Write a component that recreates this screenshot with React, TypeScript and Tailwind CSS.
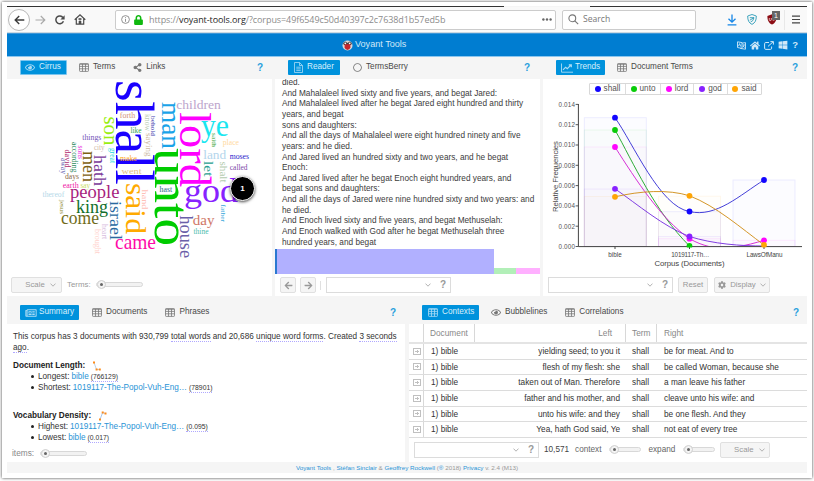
import React from "react";
import {
  FaArrowLeft,
  FaArrowRight,
  FaCog,
  FaHome,
  FaLock,
  FaRegCircle,
  FaRegEye,
  FaRegNewspaper,
  FaShareAlt,
  FaWindows,
} from "react-icons/fa";

type Word = [string, number, number, number, number, string, boolean?];

/* text, x, y, font size, drawn length, colour, vertical */
const words: Word[] = [
  ["shall", 115.5, 80, 55, 105, "#1a00ff", true],
  ["unto", 155, 148, 50, 98, "#00cc00", true],
  ["lord", 179.5, 112, 44, 75, "#ff00ff", true],
  ["man", 161.5, 102, 27, 47, "#1aa3e8", true],
  ["ye", 201, 136, 31, 28, "#1ae6f0", false],
  ["god", 184, 201.5, 33, 54, "#8822ff", false],
  ["said", 125.5, 183, 30, 51, "#ffaa00", true],
  ["came", 115, 249, 22, 41, "#ff0aa8", false],
  ["son", 103.5, 116.5, 21, 29, "#99ee11", true],
  ["hath", 93.8, 155, 17.5, 31, "#7a3a9a", true],
  ["men", 83, 151, 19, 31, "#7d6010", true],
  ["people", 70, 198, 19, 49.5, "#a81f80", false],
  ["king", 76, 212.5, 19, 32, "#12702c", false],
  ["come", 61, 224, 19, 38, "#6f6c1a", false],
  ["israel", 110, 201, 17, 39, "#2a6aa0", true],
  ["great", 109.5, 148, 7.5, 15, "#20d8e0", true],
  ["city", 94, 150, 8, 10.5, "#d0b8a8", false],
  ["things", 82.3, 140.3, 8, 19, "#7455b8", false],
  ["sons", 78, 145.5, 7.5, 13.5, "#e838e0", true],
  ["according", 72.4, 142, 7.5, 30.5, "#2d8a5c", true],
  ["david", 65, 149.5, 7.5, 18, "#b02a70", true],
  ["away", 60.5, 158, 7.5, 16, "#6a68b4", true],
  ["days", 65, 178.7, 8.5, 14, "#8a6848", false],
  ["earth", 62.7, 188, 7.5, 16, "#f020a8", false],
  ["say", 80.5, 187.5, 8, 9.8, "#c8e068", false],
  ["thereof", 42.5, 196.8, 8, 21.7, "#b4d8e8", false],
  ["jesus", 60.3, 200, 7, 14, "#8c8a30", true],
  ["heart", 101.5, 224, 7.5, 15, "#d8bce0", true],
  ["brought", 94.5, 229, 7.5, 25, "#ffd2cc", true],
  ["forth", 119.8, 117.6, 8, 15.4, "#d29078", false],
  ["like", 130.5, 133.2, 8, 11, "#30a850", false],
  ["make", 120, 160.6, 8, 17, "#ffaa22", false],
  ["went", 121.5, 173.8, 9, 20, "#e4bc80", false],
  ["hand", 142, 189.5, 9, 20, "#ffc0b8", true],
  ["know", 144.5, 114, 7.5, 17, "#b8ccb4", true],
  ["saying", 146, 133, 8, 23.5, "#ccb8a0", true],
  ["behold", 151.4, 116, 7, 20, "#4440b0", true],
  ["children", 176.3, 108.7, 12.5, 44.5, "#bca4cc", false],
  ["saith", 212.3, 133, 7, 14, "#30a030", true],
  ["place", 222.7, 144.5, 8, 16.3, "#ffdaa0", false],
  ["moses", 229.7, 158.7, 7.5, 19.3, "#2a22cc", false],
  ["called", 229.8, 169.8, 8, 17.8, "#7c48a8", false],
  ["land", 203.2, 158.6, 12, 23, "#b4d6ec", false],
  ["let", 204.3, 161, 13, 15.5, "#28a090", true],
  ["shalt", 220.3, 161.5, 10, 21, "#b4ccb0", true],
  ["hast", 159.6, 192.3, 8, 12.6, "#286a88", false],
  ["day", 192.8, 225, 15, 21.7, "#cf7868", false],
  ["thine", 193.5, 233.5, 7.5, 15, "#48bcac", false],
  ["house", 180.2, 215.5, 18, 42.5, "#6a60a8", true],
  ["father", 221.3, 204.5, 7, 17.5, "#38a8dc", true],
];

function Cirrus() {
  return (
    <svg
      width="265"
      height="194"
      viewBox="7 79 265 194"
      className="block font-['Liberation_Serif',serif]"
    >
      {words.map(([t, x, y, size, len, fill, vertical]) => (
        <text
          key={t}
          x={0}
          y={0}
          fontSize={size}
          textLength={len}
          lengthAdjust="spacingAndGlyphs"
          fill={fill}
          transform={`translate(${x} ${y})${vertical ? " rotate(90)" : ""}`}
        >
          {t}
        </text>
      ))}
    </svg>
  );
}

function GridIcon({ className = "" }: { className?: string }) {
  return (
    <svg width="10" height="9" viewBox="0 0 10 9" fill="none" stroke="currentColor" strokeWidth="0.8" className={className}>
      <rect x="0.5" y="0.6" width="9" height="7.8" rx="0.7" />
      <path d="M0.5 1.3H9.5M0.5 3.4H9.5M0.5 5.8H9.5M3.5 1V8.4M6.5 1V8.4" />
    </svg>
  );
}

function FileIcon() {
  return (
    <svg width="9" height="11" viewBox="0 0 9 11" fill="none" stroke="currentColor" strokeWidth="0.8">
      <path d="M0.5 0.5H5.5L8.5 3.5V10.5H0.5ZM5.5 0.5V3.5H8.5M2.3 5.2H6.7M2.3 6.9H6.7M2.3 8.6H6.7" />
    </svg>
  );
}

function TrendIcon() {
  return (
    <svg width="12" height="10" viewBox="0 0 12 10" fill="none" stroke="currentColor" strokeWidth="0.9">
      <path d="M0.5 0.5V9.2H12" />
      <path d="M2 6.8L4.6 4.2L6.3 5.7L9.8 2.2M7.8 1.8H10.3V4.3" strokeWidth="1.2" />
    </svg>
  );
}

function Chevron() {
  return (
    <svg width="6" height="4" viewBox="0 0 6 4" fill="none" stroke="#aaa" strokeWidth="0.9">
      <path d="M0.5 0.6L3 3.2L5.5 0.6" />
    </svg>
  );
}

function Tab({ icon, label, active = false, className = "" }: { icon: React.ReactNode; label: string; active?: boolean; className?: string }) {
  return (
    <div
      className={`flex h-[15px] shrink-0 items-center gap-[4px] whitespace-nowrap rounded-[1px] text-[8.2px] leading-none ${
        active ? "bg-[#0092dc] text-[#d8effb]" : "text-[#484848]"
      } ${className}`}
    >
      <span className={active ? "opacity-80" : "text-[#777]"}>{icon}</span>
      <span>{label}</span>
    </div>
  );
}

function Help({ className = "" }: { className?: string }) {
  return <span className={`ml-auto text-[10px] font-bold text-[#2a9fdd] ${className}`}>?</span>;
}

function Slider({ className = "" }: { className?: string }) {
  return (
    <div className={`flex h-[5px] items-center rounded-full border border-[#d8d8d8] bg-[#f2f2f2] ${className}`}>
      <span className="flex h-[9px] w-[9px] shrink-0 items-center justify-center rounded-full border border-[#cfcfcf] bg-[#f4f4f4]">
        <span className="h-[3px] w-[3px] rounded-full bg-[#666]" />
      </span>
    </div>
  );
}

function Combo({ className = "" }: { className?: string }) {
  return (
    <div className={`flex h-[16px] shrink-0 items-center justify-end border border-[#dcdcdc] bg-white pr-[4px] ${className}`}>
      <Chevron />
      <span className="ml-[9px] text-[10px] font-bold leading-none text-[#999]">?</span>
    </div>
  );
}

function GreyButton({ children, className = "" }: { children: React.ReactNode; className?: string }) {
  return (
    <div
      className={`flex h-[16px] shrink-0 items-center justify-center rounded-[2px] border border-[#e0e0e0] bg-[#f5f5f5] text-[7.8px] text-[#999] ${className}`}
    >
      {children}
    </div>
  );
}

function Browser() {
  return (
    <div className="flex h-[26px] shrink-0 items-center border-b border-[#c9d8e2] bg-[#f9f9f9]">
      <div className="ml-[1px] flex h-[22px] w-[22px] shrink-0 items-center justify-center rounded-full border border-[#b8b8b8] bg-white">
        <svg width="11" height="10" viewBox="0 0 11 10" fill="none" stroke="#3c3c3c" strokeWidth="1.4">
          <path d="M10.3 5H1.2M5.2 1L1.2 5L5.2 9" />
        </svg>
      </div>
      <svg width="11" height="10" viewBox="0 0 11 10" fill="none" stroke="#aaa" strokeWidth="1.2" className="ml-[5px]">
        <path d="M0.5 5H9.8M5.8 1L9.8 5L5.8 9" />
      </svg>
      <svg width="10" height="10" viewBox="0 0 10 10" fill="none" stroke="#4a4a4a" strokeWidth="1.5" className="ml-[9px]">
        <path d="M8.4 6.3A3.9 3.9 0 1 1 8 2.6" />
        <path d="M9.6 0.3V4.5H5.4Z" fill="#4a4a4a" stroke="none" />
      </svg>
      <svg width="12" height="11" viewBox="0 0 12 11" fill="none" stroke="#4a4a4a" strokeWidth="1.2" className="ml-[9px]">
        <path d="M0.7 5.7L6 0.9L11.3 5.7M2.3 4.8V10.2H9.7V4.8" />
        <path d="M5 10V7H7V10M4.8 4.6H7.2V5.6H4.8Z" fill="#4a4a4a" strokeWidth="0.6" />
      </svg>
      <div className="ml-[29px] flex h-[20px] w-[441px] shrink-0 items-center rounded-[2px] border border-[#ccc] bg-white text-[9px] text-[#8c8c8c]">
        <svg width="9" height="9" viewBox="0 0 9 9" className="ml-[5px]" fill="none" stroke="#777" strokeWidth="0.8">
          <circle cx="4.5" cy="4.5" r="3.9" />
          <path d="M4.5 4V6.8M4.5 2.2V3.2" />
        </svg>
        <FaLock className="ml-[4px] h-[10px] w-[9px] text-[#0fb80f]" />
        <span className="ml-[6px] whitespace-nowrap font-['Open_Sans',sans-serif] tracking-[-0.08px]">
          https://<span className="text-[#1e1e1e]">voyant-tools.org</span>/?corpus=49f6549c50d40397c2c7638d1b57ed5b
        </span>
        <svg width="10" height="3" viewBox="0 0 10 3" className="ml-auto mr-[3px]" fill="#666">
          <circle cx="1.4" cy="1.5" r="1.2" />
          <circle cx="5" cy="1.5" r="1.2" />
          <circle cx="8.6" cy="1.5" r="1.2" />
        </svg>
      </div>
      <div className="ml-[6px] flex h-[20px] w-[134px] shrink-0 items-center rounded-[2px] border border-[#ccc] bg-white font-['Open_Sans',sans-serif] text-[8.6px] text-[#777]">
        <svg width="11" height="11" viewBox="0 0 11 11" className="ml-[5px] mr-[4px]" fill="none" stroke="#777" strokeWidth="1.1">
          <circle cx="4.3" cy="4.3" r="3.4" />
          <path d="M6.8 6.8L10.2 10.2" />
        </svg>
        Search
      </div>
      <svg width="10" height="12" viewBox="0 0 10 12" fill="none" stroke="#1485e6" strokeWidth="1.3" className="ml-[31px]">
        <path d="M5 0.5V8M1.5 4.8L5 8.2L8.5 4.8M0.6 10.8H9.4" />
      </svg>
      <svg width="10" height="11" viewBox="0 0 10 11" fill="none" stroke="#2c9cb8" strokeWidth="0.9" className="ml-[10px]">
        <path d="M5 0.5L9.3 2C9.3 6.5 8.2 8.8 5 10.4C1.8 8.8 0.7 6.5 0.7 2Z" />
        <path d="M2.8 3.7H7M2.8 6.2L7 3.7L5.8 6.6L3.6 8" />
      </svg>
      <div className="relative ml-[10px] h-[11px] w-[11px] shrink-0">
        <svg width="10" height="11" viewBox="0 0 10 11">
          <path d="M5 0.3L9.6 2C9.6 6.5 8.4 8.8 5 10.6C1.6 8.8 0.4 6.5 0.4 2Z" fill="#8c0d14" />
          <path d="M2.3 4V5.7Q2.3 6.6 3.3 6.6Q4.3 6.6 4.3 5.7V4M6.5 6.3A1 1 0 1 1 6.6 6.3" fill="none" stroke="#f4dada" strokeWidth="0.8" />
        </svg>
        <span className="absolute -top-[3px] left-[5px] flex h-[9px] w-[8px] items-center justify-center bg-[#666] text-[7px] leading-none text-white">1</span>
      </div>
      <div className="ml-[6px] h-[20px] w-px bg-[#e8e8e8]" />
      <svg width="8" height="9" viewBox="0 0 8 9" stroke="#444" strokeWidth="1.2" className="ml-[7px]">
        <path d="M0 1.2H8M0 4.5H8M0 7.8H8" />
      </svg>
    </div>
  );
}

function Header() {
  return (
    <div className="flex h-[24px] shrink-0 items-center border-b border-t border-b-[#8cc6ee] border-t-[#3c96d8] bg-[#007dd1] text-[#cfe8f8]">
      <svg width="11" height="11" viewBox="0 0 11 11" className="ml-[335px]">
        <circle cx="5.5" cy="5.5" r="5" fill="#d9d9d9" />
        <path d="M1 3.2L3.4 1.5L5.5 3L7.6 1.5L10 3.2L9 5H2Z" fill="#4a3c3c" />
        <path d="M2.6 4.2H8.4V7.2Q7.8 10 5.5 10Q3.2 10 2.6 7.2Z" fill="#c8252d" />
        <circle cx="3.3" cy="3.3" r="0.9" fill="#fff" />
        <circle cx="7.7" cy="3.3" r="0.9" fill="#fff" />
      </svg>
      <span className="ml-[2px] text-[9.1px] leading-none">Voyant Tools</span>
      <div className="ml-auto mr-[9px] flex items-center gap-[4px]">
        <svg width="9" height="9" viewBox="0 0 9 9" fill="none" stroke="#cfe8f8" strokeWidth="0.9">
          <path d="M0.5 0.8L5 1.6V7.4L0.5 6.5ZM5 2.2L8.5 1.6V8.2L3.2 7.4" />
          <path d="M1.5 5.2L2.6 2.6L3.8 5.6M5.8 3.9H7.8M7.2 3.9L5.8 6.4M6.1 4.9L7.7 6.6" />
        </svg>
        <FaHome className="h-[9px] w-[10px]" />
        <svg width="10" height="9" viewBox="0 0 10 9" fill="none" stroke="#cfe8f8" strokeWidth="1">
          <path d="M5 1.5H1.8Q0.6 1.5 0.6 2.7V7.2Q0.6 8.4 1.8 8.4H6.4Q7.6 8.4 7.6 7.2V5.5M4 5.4L9.2 0.7M6.4 0.6H9.4V3.6" />
        </svg>
        <FaWindows className="h-[10px] w-[10px]" />
        <span className="text-[9.5px] font-bold leading-none">?</span>
      </div>
    </div>
  );
}

function CirrusPanel() {
  return (
    <div className="relative flex w-[265px] flex-col">
      <div className="flex h-[22px] shrink-0 items-center bg-[#f5f5f5] pb-px">
        <Tab active icon={<FaRegEye className="h-[9px] w-[10px]" />} label="Cirrus" className="ml-[13px] w-[47px] border border-[#7cc5ee] pl-[4px]" />
        <Tab icon={<GridIcon />} label="Terms" className="ml-[12px]" />
        <Tab icon={<FaShareAlt className="h-[9px] w-[9px]" />} label="Links" className="ml-[18px]" />
        <Help className="mr-[9px]" />
      </div>
      <Cirrus />
      <div className="absolute left-[223px] top-[119px] flex h-[25px] w-[25px] items-center justify-center rounded-full border border-white bg-black text-[8px] font-bold text-white shadow-[0_1px_3px_rgba(0,0,0,0.7)]">
        1
      </div>
      <div className="flex h-[23px] items-center text-[7.9px] text-[#999]">
        <GreyButton className="ml-[4px] w-[51px] gap-[5px] pl-[8px]">
          Scale <Chevron />
        </GreyButton>
        <span className="ml-[5px]">Terms:</span>
        <Slider className="ml-[5px] w-[47px]" />
      </div>
    </div>
  );
}

const verses = [
  "died.",
  "And Mahalaleel lived sixty and five years, and begat Jared:",
  "And Mahalaleel lived after he begat Jared eight hundred and thirty",
  "years, and begat",
  "sons and daughters:",
  "And all the days of Mahalaleel were eight hundred ninety and five",
  "years: and he died.",
  "And Jared lived an hundred sixty and two years, and he begat",
  "Enoch:",
  "And Jared lived after he begat Enoch eight hundred years, and",
  "begat sons and daughters:",
  "And all the days of Jared were nine hundred sixty and two years: and",
  "he died.",
  "And Enoch lived sixty and five years, and begat Methuselah:",
  "And Enoch walked with God after he begat Methuselah three",
  "hundred years, and begat",
];

function ReaderPanel() {
  return (
    <div className="flex w-[265px] flex-col">
      <div className="flex h-[22px] shrink-0 items-center bg-[#f5f5f5] pb-px">
        <Tab active icon={<FileIcon />} label="Reader" className="ml-[13px] w-[52px] pl-[6px]" />
        <Tab icon={<FaRegCircle className="h-[9px] w-[9px]" />} label="TermsBerry" className="ml-[13px]" />
        <Help className="mr-[10px]" />
      </div>
      <div className="flex h-[170px] shrink-0 flex-col justify-end overflow-hidden pb-[0.6px] pl-[7px]">
        {verses.map((v) => (
          <div key={v} className="h-[10.66px] shrink-0 whitespace-nowrap text-[8.25px] leading-[10.66px] text-[#3c3c3c]">
            {v}
          </div>
        ))}
      </div>
      <div className="flex h-[25px] shrink-0 items-end">
        <div className="h-full w-[2px] bg-[#2a78d0]" />
        <div className="h-full w-[217px] bg-[#b1b0ff]" />
        <div className="h-[6px] w-[22px] bg-[#b2efb8]" />
        <div className="h-[6px] flex-1 bg-[#ffb0ff]" />
      </div>
      <div className="flex h-[22px] items-center">
        <GreyButton className="ml-[5px] w-[16px]">
          <FaArrowLeft className="h-[9px] w-[9px]" />
        </GreyButton>
        <GreyButton className="ml-[4px] w-[16px]">
          <FaArrowRight className="h-[9px] w-[9px]" />
        </GreyButton>
        <div className="ml-[4px] h-[9px] w-px bg-[#e0e0e0]" />
        <Combo className="ml-[5px] w-[125px]" />
      </div>
    </div>
  );
}

const ticks = ["0.014", "0.012", "0.010", "0.008", "0.006", "0.004", "0.002", "0.000"];

/* x, y of a bar's top left corner and its colour; every bar stands on the axis */
const bars: [number, number, string][] = [
  [584.3, 117.7, "#0000ff"],
  [584.3, 130, "#00cc00"],
  [584.3, 147, "#ff00ff"],
  [584.3, 189, "#7722ff"],
  [584.3, 196.5, "#ffaa00"],
  [658.5, 196.2, "#ffaa00"],
  [658.5, 211.7, "#0000ff"],
  [658.5, 236.5, "#7722ff"],
  [658.5, 238.7, "#ff00ff"],
  [733, 180, "#0000ff"],
  [733, 240.3, "#ff00ff"],
];

const curves: [string, string][] = [
  ["M615 117.7C633 143 660 207 689.5 211.5C716 218 740 195 764 180", "#3a35d6"],
  ["M615 130C633 162 655 212 689.5 246", "#22a82c"],
  ["M615 147C636 180 661 219 689.5 238.7C697 243 703 245 710 246.8M737 246.6C746 245.5 755 243 764 240.3", "#d426d4"],
  ["M615 188.8C637 204 664 227 689.5 236.5C713 244 741 246 764 246", "#7a35e0"],
  ["M615 196.8C640 191 668 189 689.5 195.8C716 206 741 228 764 245", "#d2901c"],
];

const dots: [number, number, string][] = [
  [615, 117.7, "#1205ff"],
  [689.5, 211.5, "#1205ff"],
  [764, 180, "#1205ff"],
  [615, 130, "#08cc08"],
  [689.5, 246, "#08cc08"],
  [615, 147, "#ff05ff"],
  [689.5, 238.7, "#ff05ff"],
  [764, 240.3, "#ff05ff"],
  [615, 188.8, "#8822ff"],
  [689.5, 236.5, "#8822ff"],
  [615, 196.8, "#ffa505"],
  [689.5, 195.8, "#ffa505"],
  [764, 245, "#ffa505"],
];

function TrendsChart() {
  return (
    <svg width="264" height="177" viewBox="543 97 264 177" className="block shrink-0 font-['Liberation_Sans',sans-serif]">
      {bars.map(([x, y, c]) => (
        <rect key={`${x}-${y}`} x={x} y={y} width="62" height={246.5 - y} fill={c} fillOpacity="0.012" stroke={c} strokeOpacity="0.08" strokeWidth="0.9" />
      ))}
      <clipPath id="plot">
        <rect x="578" y="100" width="225" height="146.5" />
      </clipPath>
      <g fill="none" strokeWidth="0.95" clipPath="url(#plot)">
        {curves.map(([d, c]) => (
          <path key={c} d={d} stroke={c} />
        ))}
      </g>
      <path d="M578.4 104V246.6H802M615 246.6V249M689.5 246.6V249M764 246.6V249" fill="none" stroke="#444" strokeWidth="1" />
      {ticks.map((t, i) => (
        <g key={t}>
          <path d={`M575.6 ${104.4 + i * 20.3}H578.4`} stroke="#444" strokeWidth="0.9" />
          <text x="575" y={106.7 + i * 20.3} fontSize="6.3" fill="#555" textAnchor="end" textLength="16.5">
            {t}
          </text>
        </g>
      ))}
      <clipPath id="dots">
        <rect x="578" y="100" width="225" height="147.4" />
      </clipPath>
      <g clipPath="url(#dots)">
        {dots.map(([x, y, c]) => (
          <circle key={`${x}-${y}`} cx={x} cy={y} r="2.9" fill={c} />
        ))}
      </g>
      <g fontSize="6.3" fill="#444" textAnchor="middle">
        <text x="615" y="257" textLength="13.5">bible</text>
        <text x="690.3" y="257" textLength="38">1019117-Th…</text>
        <text x="764.5" y="257" textLength="36">LawsOfManu</text>
      </g>
      <g fontSize="7.8" fill="#444" textAnchor="middle">
        <text x="689.5" y="265.7" textLength="70">Corpus (Documents)</text>
        <text transform="translate(558 176.5) rotate(-90)" textLength="71">
          Relative Frequencies
        </text>
      </g>
    </svg>
  );
}

function TrendsPanel() {
  return (
    <div className="flex w-[264px] flex-col">
      <div className="flex h-[22px] shrink-0 items-center bg-[#f5f5f5] pb-px">
        <Tab active icon={<TrendIcon />} label="Trends" className="ml-[13px] w-[49px] !gap-[2px] pl-[5px]" />
        <Tab icon={<GridIcon />} label="Document Terms" className="ml-[12px]" />
        <Help className="mr-[9px]" />
      </div>
      <div className="flex h-[18px] shrink-0 items-end pl-[46px] pb-[2px] text-[8.2px] text-[#555]">
        <div className="flex h-[12px] w-[173px] divide-x divide-[#ddd] rounded-[1px] border border-[#d8d8d8]">
          <Legend color="bg-[#1205ff]" label="shall" className="w-[36px]" />
          <Legend color="bg-[#08cc08]" label="unto" className="w-[35px]" />
          <Legend color="bg-[#ff05ff]" label="lord" className="w-[33px]" />
          <Legend color="bg-[#8822ff]" label="god" className="w-[34px]" />
          <Legend color="bg-[#ffa505]" label="said" className="flex-1" />
        </div>
      </div>
      <TrendsChart />
      <div className="flex h-[22px] items-center">
        <Combo className="ml-[5px] w-[125px]" />
        <GreyButton className="ml-[5px] w-[30px]">Reset</GreyButton>
        <GreyButton className="ml-[6px] w-[56px] gap-[4px]">
          <FaCog className="h-[8px] w-[8px]" />
          Display
          <Chevron />
        </GreyButton>
      </div>
    </div>
  );
}

function Legend({ color, label, className }: { color: string; label: string; className: string }) {
  return (
    <span className={`flex shrink-0 items-center justify-center gap-[3px] leading-none ${className}`}>
      <span className={`h-[6px] w-[6px] rounded-full ${color}`} />
      {label}
    </span>
  );
}

const dotted = "border-b border-dotted border-[#b0a8ff]";

function SummaryPanel() {
  return (
    <div className="flex w-[398px] flex-col bg-white">
      <div className="flex h-[28px] shrink-0 items-center bg-[#f5f5f5] pt-[5px]">
        <Tab active icon={<FaRegNewspaper className="h-[10px] w-[12px]" />} label="Summary" className="ml-[13px] w-[59px] !gap-[2px] pl-[5px]" />
        <Tab icon={<GridIcon />} label="Documents" className="ml-[13px]" />
        <Tab icon={<GridIcon />} label="Phrases" className="ml-[18px]" />
        <Help className="mr-[9px]" />
      </div>
      <div className="flex-1 whitespace-nowrap pl-[6px] pt-[7px] text-[8.2px] leading-[11px] text-[#333]">
        <div>
          This corpus has 3 documents with 930,799 <span className={dotted}>total words</span> and 20,686{" "}
          <span className={dotted}>unique word forms</span>. Created <span className={dotted}>3 seconds</span>
        </div>
        <div>
          <span className={dotted}>ago</span>.
        </div>
        <div className="mt-[7px] flex h-[11px] items-center font-bold text-[#222]">
          Document Length:
          <svg width="8" height="10" viewBox="0 0 8 10" className="ml-[8px]">
            <path d="M1 1.5L3.5 8.5H6.5" fill="none" stroke="#a8c4e0" strokeWidth="0.8" />
            <path d="M0 0.5H2V2.5H0ZM2.6 7.5H4.6V9.5H2.6ZM5.8 7.5H7.8V9.5H5.8Z" fill="#ff8c1a" />
          </svg>
        </div>
        <Item label="Longest:" link="bible" value="(766129)" />
        <Item label="Shortest:" link="1019117-The-Popol-Vuh-Eng…" value="(78901)" />
        <div className="mt-[17px] flex h-[11px] items-center font-bold text-[#222]">
          Vocabulary Density:
          <svg width="8" height="10" viewBox="0 0 8 10" className="ml-[8px]">
            <path d="M1 8.5L3.7 1.5L6.5 2.5" fill="none" stroke="#8fb8e8" strokeWidth="0.8" />
            <path d="M0 7.5H2V9.5H0ZM2.7 0.5H4.7V2.5H2.7ZM5.5 1.5H7.5V3.5H5.5Z" fill="#ff8c1a" />
          </svg>
        </div>
        <Item label="Highest:" link="1019117-The-Popol-Vuh-Eng…" value="(0.095)" />
        <Item label="Lowest:" link="bible" value="(0.017)" />
      </div>
      <div className="flex h-[22px] shrink-0 items-center pb-px text-[8.3px] text-[#888]">
        <span className="ml-[5px]">items:</span>
        <Slider className="ml-[6px] w-[47px]" />
      </div>
    </div>
  );
}

function Item({ label, link, value }: { label: string; link: string; value: string }) {
  return (
    <div className="flex h-[11px] items-center pl-[18px]">
      <span className="mr-[4px] h-[3px] w-[3px] rounded-full bg-[#222]" />
      {label}
      <span className="ml-[2px] text-[#2a94d6]">{link}</span>
      <span className="ml-[2px] h-[10px] border-b border-dotted border-[#b0a8ff] text-[6.8px] leading-[10px]">{value}</span>
    </div>
  );
}

const rows = [
  ["yielding seed; to you it", "be for meat. And to"],
  ["flesh of my flesh: she", "be called Woman, because she"],
  ["taken out of Man. Therefore", "a man leave his father"],
  ["father and his mother, and", "cleave unto his wife: and"],
  ["unto his wife: and they", "be one flesh. And they"],
  ["Yea, hath God said, Ye", "not eat of every tree"],
];

function ContextsPanel() {
  return (
    <div className="flex w-[398px] flex-col bg-white">
      <div className="flex h-[28px] shrink-0 items-center bg-[#f5f5f5] pt-[5px]">
        <Tab active icon={<GridIcon />} label="Contexts" className="ml-[13px] w-[57px] pl-[6px]" />
        <Tab icon={<FaRegEye className="h-[9px] w-[10px]" />} label="Bubblelines" className="ml-[12px]" />
        <Tab icon={<GridIcon />} label="Correlations" className="ml-[18px]" />
        <Help className="mr-[8px]" />
      </div>
      <div className="flex h-[20px] shrink-0 items-stretch border-b-2 border-[#e4e4e4] text-[8.3px] leading-[18px] text-[#888]">
        <div className="w-[15px] border-r border-[#d8d8d8]" />
        <div className="w-[51px] border-r border-[#d8d8d8] pl-[6px]">Document</div>
        <div className="w-[151px] border-r border-[#d8d8d8] pr-[13px] text-right">Left</div>
        <div className="w-[31px] border-r border-[#d8d8d8] pl-[6px]">Term</div>
        <div className="pl-[7px]">Right</div>
      </div>
      {rows.map(([left, right]) => (
        <div key={left} className="flex h-[15.67px] shrink-0 items-stretch border-b border-[#dcdcdc] text-[8.25px] leading-[15px] text-[#333]">
          <div className="flex w-[15px] items-center justify-center border-r border-[#d8d8d8]">
            <svg width="9" height="9" viewBox="0 0 9 9" fill="none" stroke="#c0c0c0" strokeWidth="1" shapeRendering="crispEdges">
              <path d="M1.5 1.5H8.5V7.5H1.5ZM3 4.5H7M5.5 3V6" />
            </svg>
          </div>
          <div className="w-[51px] pl-[7px]">1) bible</div>
          <div className="w-[151px] whitespace-nowrap pr-[6px] text-right">{left}</div>
          <div className="w-[31px] pl-[6px]">shall</div>
          <div className="whitespace-nowrap pl-[7px]">{right}</div>
        </div>
      ))}
      <div className="flex flex-1 items-center text-[8.2px] text-[#666]">
        <Combo className="ml-[5px] w-[125px]" />
        <span className="ml-[5px] text-[#444]">10,571</span>
        <span className="ml-[6px]">context</span>
        <Slider className="ml-[8px] w-[32px]" />
        <span className="ml-[7px]">expand</span>
        <Slider className="ml-[8px] w-[32px]" />
        <GreyButton className="ml-[5px] w-[50px] gap-[5px] pl-[8px]">
          Scale <Chevron />
        </GreyButton>
      </div>
    </div>
  );
}

export default function App() {
  return (
    <div className="h-[481px] w-[814px] overflow-hidden bg-white pl-[2px] pt-[2px] font-['Liberation_Sans',Arial,sans-serif]">
      <div className="h-[476px] w-[810px] bg-white pl-[5px] pt-[4px] shadow-[0_0_3px_rgba(0,0,0,0.75)]">
        <div className="flex h-[467px] w-[800px] flex-col bg-[#f5f5f5]">
          <div className="flex h-px shrink-0 justify-between">
            <div className="w-[497px] bg-[#333]" />
            <div className="w-[217px] bg-[#333]" />
          </div>
          <Browser />
          <Header />
          <div className="flex h-[239px] shrink-0 justify-between">
            <div className="flex bg-white"><CirrusPanel /></div>
            <div className="flex bg-white"><ReaderPanel /></div>
            <div className="flex bg-white"><TrendsPanel /></div>
          </div>
          <div className="flex h-[166px] shrink-0 justify-between">
            <SummaryPanel />
            <ContextsPanel />
          </div>
          <div className="flex flex-1 items-center justify-center whitespace-pre text-[6.25px] text-[#999]">
            <span className="text-[#2a94d6]">Voyant Tools</span> , <span className="text-[#2a94d6]">Stéfan Sinclair</span> &amp;{" "}
            <span className="text-[#2a94d6]">Geoffrey Rockwell</span> (<span className="text-[#2a94d6]">®</span> 2018){" "}
            <span className="text-[#2a94d6]">Privacy</span> v. 2.4 (M13)
          </div>
        </div>
      </div>
    </div>
  );
}
